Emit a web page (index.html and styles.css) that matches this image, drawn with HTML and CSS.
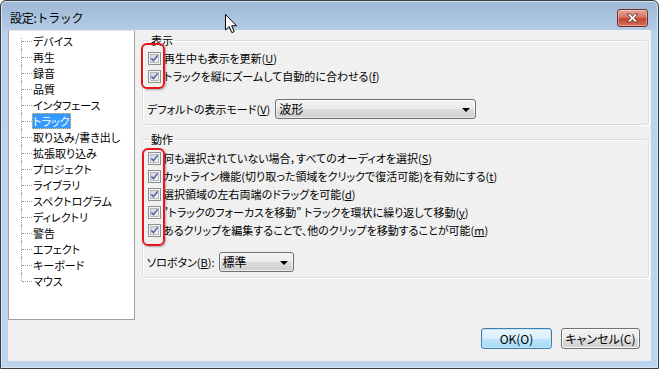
FILE: index.html
```html
<!DOCTYPE html>
<html lang="ja">
<head>
    <meta charset="UTF-8">
    <title>設定:トラック</title>
    <link rel="stylesheet" href="styles.css">
</head>
<body>
    <svg class="defs" width="0" height="0">
        <defs>
            <linearGradient id="cbFill" x1="0" y1="0" x2="1" y2="1">
                <stop offset="0" stop-color="#cfd2d6"/>
                <stop offset="1" stop-color="#f7f7f7"/>
            </linearGradient>
            <symbol id="chk" viewBox="0 0 13 13">
                <rect x="0.5" y="0.5" width="12" height="12" fill="#f4f4f4" stroke="#8e8f8f"/>
                <rect x="2.5" y="2.5" width="8" height="8" fill="url(#cbFill)" stroke="#b4b8bd"/>
                <path d="M3.4 6.4 L5.5 8.7 L9.6 3.4" fill="none" stroke="#4a5ea6" stroke-width="1.5"/>
            </symbol>
        </defs>
    </svg>

    <div class="window">
        <div class="titlebar">
            <span class="title">設定:トラック</span>
            <span class="close">
                <svg width="13" height="10" viewBox="0 0 13 10">
                    <path d="M1 1 H4.5 L6.5 3.4 L8.5 1 H12 L8.3 5 L12 9 H8.5 L6.5 6.6 L4.5 9 H1 L4.7 5 Z" fill="#fff" stroke="#5a2a2a" stroke-width="0.8"/>
                </svg>
            </span>
        </div>

        <div class="client">
            <div class="main">
                <div class="tree">
                    <ul>
                        <li><span>デバイス</span></li>
                        <li><span>再生</span></li>
                        <li><span>録音</span></li>
                        <li><span>品質</span></li>
                        <li><span>インタフェース</span></li>
                        <li><span class="selected">トラック</span></li>
                        <li><span>取り込み/書き出し</span></li>
                        <li><span>拡張取り込み</span></li>
                        <li><span>プロジェクト</span></li>
                        <li><span>ライブラリ</span></li>
                        <li><span>スペクトログラム</span></li>
                        <li><span>ディレクトリ</span></li>
                        <li><span>警告</span></li>
                        <li><span>エフェクト</span></li>
                        <li><span>キーボード</span></li>
                        <li><span>マウス</span></li>
                    </ul>
                </div>

                <div class="panel">
                    <fieldset class="group group-view">
                        <legend>表示</legend>
                        <div class="check"><svg class="cb"><use href="#chk"/></svg><span>再生中も表示を更新(<u>U</u>)</span></div>
                        <div class="check"><svg class="cb"><use href="#chk"/></svg><span>トラックを縦にズームして自動的に合わせる(<u>f</u>)</span></div>
                        <div class="field field-view">
                            <span>デフォルトの表示モード(<u>V</u>)</span>
                            <div class="combo combo-wide"><span>波形</span><i class="arrow"></i></div>
                        </div>
                    </fieldset>

                    <fieldset class="group group-edit">
                        <legend>動作</legend>
                        <div class="check"><svg class="cb"><use href="#chk"/></svg><span>何も選択されていない場合，すべてのオーディオを選択(<u>S</u>)</span></div>
                        <div class="check"><svg class="cb"><use href="#chk"/></svg><span>カットライン機能(切り取った領域をクリックで復活可能)を有効にする(<u>t</u>)</span></div>
                        <div class="check"><svg class="cb"><use href="#chk"/></svg><span>選択領域の左右両端のドラッグを可能(<u>d</u>)</span></div>
                        <div class="check"><svg class="cb"><use href="#chk"/></svg><span>"トラックのフォーカスを移動" トラックを環状に繰り返して移動(<u>y</u>)</span></div>
                        <div class="check"><svg class="cb"><use href="#chk"/></svg><span>あるクリップを編集することで、他のクリップを移動することが可能(<u>m</u>)</span></div>
                        <div class="field field-solo">
                            <span>ソロボタン(<u>B</u>):</span>
                            <div class="combo combo-small"><span>標準</span><i class="arrow"></i></div>
                        </div>
                    </fieldset>
                </div>
            </div>

            <div class="footer">
                <button class="btn btn-default">OK(O)</button>
                <button class="btn btn-cancel">キャンセル(C)</button>
            </div>
        </div>
    </div>

    <!-- annotation marks and mouse pointer lying over the dialog -->
    <div class="mark mark-view"></div>
    <div class="mark mark-edit"></div>
    <svg class="pointer" width="13" height="20" viewBox="0 0 13 20">
        <path d="M0.5 0.5 V16 L4.2 12.6 L6.8 18.6 L9.2 17.6 L6.7 11.8 L11.5 11.8 Z" fill="#fff" stroke="#000" stroke-width="1" stroke-linejoin="round"/>
    </svg>
</body>
</html>
```

FILE: styles.css
```css
body {
    margin: 0;
    width: 659px;
    height: 369px;
    position: relative;
    overflow: hidden;
    font-family: "Noto Sans CJK JP", "Noto Sans", sans-serif;
    font-size: 11px;
    font-feature-settings: "palt";
    color: #000;
    background: #fff;
}

.defs {
    position: absolute;
}

.window {
    box-sizing: border-box;
    width: 659px;
    height: 369px;
    border: 1px solid #3a3d42;
    border-radius: 6px 6px 0 0;
    padding: 0 7px 7px 7px;
    background: linear-gradient(#9eb8d5 0, #b3cbe6 29px, #bad2eb 30px, #bcd4ed 100%);
    box-shadow: inset 0 0 0 1px #d6e4f3;
}

.titlebar {
    box-sizing: border-box;
    height: 29px;
    display: flex;
    justify-content: space-between;
    align-items: flex-start;
    padding: 8px 3px 0 2px;
}

.title {
    line-height: 18px;
    font-size: 12px;
    font-feature-settings: normal;
    letter-spacing: -0.3px;
    color: #000;
}

.close {
    box-sizing: border-box;
    width: 31px;
    height: 18px;
    display: flex;
    align-items: center;
    justify-content: center;
    border: 1px solid #6b3030;
    border-radius: 3px;
    background: linear-gradient(#e6a79c 0, #d47664 45%, #c2452f 55%, #d6735a 100%);
    box-shadow: inset 0 0 0 1px rgba(255,255,255,0.35);
}

.client {
    height: 331px;
    background: #f0f0f0;
    display: flex;
    flex-direction: column;
}

.main {
    height: 290px;
    display: flex;
}

/* tree view on the left */
.tree {
    box-sizing: border-box;
    width: 127px;
    height: 290px;
    background: #fff;
    border: 1px solid #a0a0a0;
    border-top-color: #e3e3e3;
}

.tree ul {
    list-style: none;
    margin: 0;
    padding: 2px 0 0 23px;
}

.tree li {
    position: relative;
    height: 16px;
    line-height: 16px;
}

.tree li::before {
    content: "";
    position: absolute;
    left: -10px;
    top: 8px;
    width: 10px;
    border-top: 1px dotted #a0a0a0;
}

.tree li::after {
    content: "";
    position: absolute;
    left: -11px;
    top: 0;
    height: 16px;
    border-left: 1px dotted #a0a0a0;
}

.tree li:first-child::after {
    top: 5px;
    height: 11px;
}

.tree li:last-child::after {
    height: 8px;
}

.tree li span {
    display: inline-block;
    height: 16px;
    padding: 0 1px;
    box-sizing: border-box;
}

.tree li span.selected {
    background: #3399ff;
    color: #fff;
    outline: 1px dotted #f0c040;
    outline-offset: -1px;
}

/* right side option groups */
.panel {
    flex: 1;
    padding: 2px 2px 0 7px;
}

.group {
    margin: 0;
    padding: 0 5px 5px 5px;
    border: 1px solid #d5dfe5;
    border-radius: 3px;
    box-shadow: 1px 1px 0 #fff, inset 1px 1px 0 #fff;
    min-width: 0;
}

.group legend {
    padding: 0 2px;
    margin-left: 1px;
    line-height: 16px;
}

.group-view .check:first-of-type {
    margin-top: 1px;
}

.group-edit {
    margin-top: 6px;
}

.group-edit .check:first-of-type {
    margin-top: 2px;
}

.check {
    height: 18px;
    display: flex;
    align-items: center;
    gap: 3px;
    white-space: nowrap;
}

.check .cb {
    width: 13px;
    height: 13px;
    flex-shrink: 0;
}

.group-edit .check {
    gap: 2px;
}

.field {
    display: flex;
    align-items: center;
    gap: 5px;
    margin-left: -1px;
}

.field-view {
    margin-top: 14px;
}

.field-solo {
    margin-top: 13px;
    gap: 4px;
}

.combo {
    box-sizing: border-box;
    height: 20px;
    border: 1px solid #707070;
    border-radius: 3px;
    background: linear-gradient(#f3f3f3 0, #ebebeb 50%, #dddddd 51%, #cfcfcf 100%);
    box-shadow: inset 0 0 0 1px rgba(255,255,255,0.6);
    display: flex;
    align-items: center;
    justify-content: space-between;
    padding: 0 5px 0 3px;
    line-height: 16px;
    font-size: 12px;
}

.combo-wide {
    width: 201px;
}

.combo-small {
    width: 75px;
}

.arrow {
    width: 0;
    height: 0;
    border-left: 4px solid transparent;
    border-right: 4px solid transparent;
    border-top: 4px solid #000;
    margin-top: 1px;
}

/* dialog buttons */
.footer {
    display: flex;
    justify-content: flex-end;
    gap: 9px;
    padding: 8px 11px 0 0;
}

.btn {
    box-sizing: border-box;
    height: 21px;
    padding: 0;
    font-family: inherit;
    font-size: 12px;
    font-feature-settings: "palt";
    line-height: 16px;
    color: #000;
    border-radius: 3px;
}

.btn-default {
    width: 71px;
    border: 1px solid #3c7fb1;
    background: linear-gradient(#eaf6fd 0, #d9f0fc 50%, #bee6fd 51%, #a7d9f5 100%);
    box-shadow: inset 0 0 0 1px #c6e6f8;
}

.btn-cancel {
    width: 79px;
    border: 1px solid #707070;
    background: linear-gradient(#f2f2f2 0, #ebebeb 50%, #dddddd 51%, #cfcfcf 100%);
    box-shadow: inset 0 0 0 1px #fcfcfc;
}

/* overlay marks */
.mark {
    position: absolute;
    box-sizing: border-box;
    border: 2px solid #e8161c;
    border-radius: 6px;
    box-shadow: 1px 1px 2px rgba(0,0,0,0.3);
}

.mark-view {
    left: 141px;
    top: 43px;
    width: 24px;
    height: 46px;
}

.mark-edit {
    left: 142px;
    top: 148px;
    width: 23px;
    height: 98px;
}

.pointer {
    position: absolute;
    left: 225px;
    top: 14px;
}
```
